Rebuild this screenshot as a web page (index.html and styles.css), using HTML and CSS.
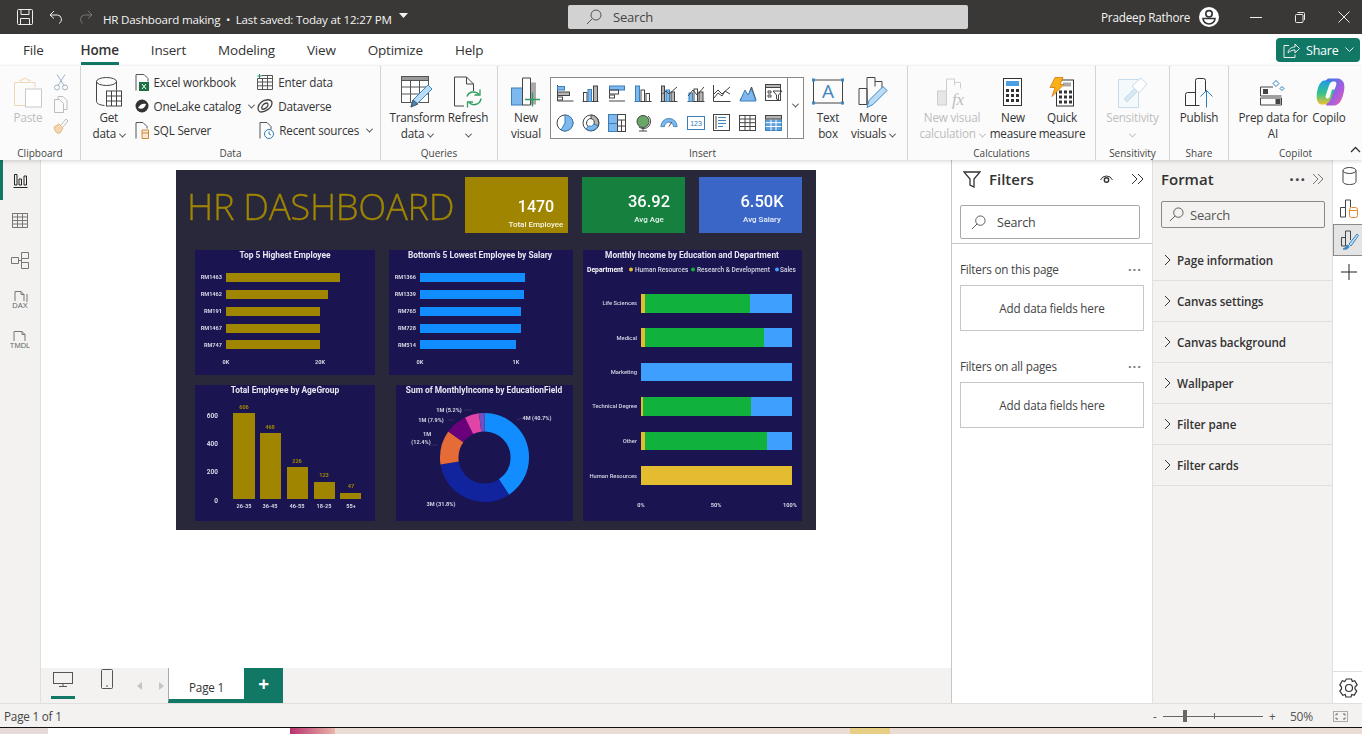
FILE: index.html
```html
<!DOCTYPE html>
<html lang="en">

<head>
    <meta charset="UTF-8">
    <meta name="viewport" content="width=device-width, initial-scale=1.0">
    <title>HR Dashboard making</title>
    <link rel="stylesheet" href="styles.css">
</head>

<body>
    <!-- title bar -->
    <header class="titlebar">
        <div class="title-left">
            <svg class="ic-light" width="16" height="16" viewBox="0 0 16 16"><rect x=".5" y=".5" width="15" height="15" rx="1"/><path d="M4 .5v5h8v-5M3.5 15.5v-6h9v6"/></svg>
            <svg class="ic-light" width="14" height="14" viewBox="0 0 14 14"><path d="M5 1 1 5l4 3.5M1 5h7.5a4.5 4.5 0 0 1 1.5 8.5"/></svg>
            <svg class="ic-dim" width="14" height="14" viewBox="0 0 14 14"><path d="M9 1l4 4-4 3.5M13 5H5.5A4.5 4.5 0 0 0 4 13.5"/></svg>
            <span class="doc-title">HR Dashboard making &nbsp;•&nbsp; Last saved: Today at 12:27 PM</span>
            <svg class="caret" width="9" height="5" viewBox="0 0 9 5"><path d="M0 0h9L4.5 5z"/></svg>
        </div>
        <div class="title-search">
            <svg class="ic" width="16" height="16" viewBox="0 0 16 16"><circle cx="10" cy="6" r="5"/><path d="M6.5 9.5 1 15"/></svg>
            <span>Search</span>
        </div>
        <div class="title-right">
            <span class="user-name">Pradeep Rathore</span>
            <svg class="avatar" width="20" height="20" viewBox="0 0 20 20"><circle cx="10" cy="10" r="10" fill="#fff"/><circle cx="10" cy="6.8" r="3.2" fill="none" stroke="#333" stroke-width="1.6"/><path d="M4 11.5h12a6 5.5 0 0 1-12 0z" fill="none" stroke="#333" stroke-width="1.6"/></svg>
            <svg class="ic-light win-min" width="12" height="12" viewBox="0 0 12 12"><path d="M0 6.5h12"/></svg>
            <svg class="ic-light win-btn" width="10" height="11" viewBox="0 0 10 11"><rect x=".5" y="2.5" width="7.5" height="8" rx="1"/><path d="M2.5.5h6a1 1 0 0 1 1 1V8"/></svg>
            <svg class="ic-light win-btn" width="12" height="12" viewBox="0 0 12 12"><path d="M.5.5l11 11M11.5.5l-11 11"/></svg>
        </div>
    </header>

    <!-- ribbon tabs -->
    <nav class="tabs">
        <span class="tab tab-file">File</span>
        <span class="tab tab-active">Home</span>
        <span class="tab">Insert</span>
        <span class="tab">Modeling</span>
        <span class="tab">View</span>
        <span class="tab">Optimize</span>
        <span class="tab">Help</span>
        <button class="share-btn">
            <svg class="ic-light" width="17" height="15" viewBox="0 0 17 15"><path d="M6 2.5H1v12h11v-3M5 10c.5-4 3-6 7-6V1l4.5 4.5L12 10V7c-3 0-5 1-7 3z"/></svg>
            <span>Share</span>
            <svg class="ic-light" width="9" height="6" viewBox="0 0 9 6"><path d="M.5.5l4 4 4-4"/></svg>
        </button>
    </nav>

    <!-- ribbon -->
    <section class="ribbon">
        <div class="group group-clipboard">
            <div class="group-body">
                <div class="big-btn paste-btn disabled">
                    <svg class="big-icon" width="30" height="32" viewBox="0 0 30 32" fill="none"><path d="M6 6H1.5v23H12M18 6h4v5M7 6V3.5h3a2 2 0 0 1 4 0h3V6z" stroke="#f2d6b3"/><rect x="12.5" y="12.5" width="16" height="18" stroke="#c9c9c9" fill="#fff"/></svg>
                    <span class="btn-label">Paste</span>
                </div>
                <div class="clip-col">
                    <svg width="14" height="17" viewBox="0 0 14 17" fill="none" stroke="#9fb2c4"><path d="M3 .5l7 11M11 .5l-7 11"/><circle cx="3" cy="13.5" r="2.5"/><circle cx="11" cy="13.5" r="2.5"/></svg>
                    <svg width="16" height="17" viewBox="0 0 16 17" fill="none" stroke="#bdbdbd"><path d="M5 3.5v-3h5l4 4v9h-4M1.5 3.5h5l4 4v9h-9z"/></svg>
                    <svg width="17" height="16" viewBox="0 0 17 16" fill="none"><path d="M9 7l5-6 2 2-5 6" stroke="#bdbdbd"/><path d="M2 9l5-3 4 4-3 5c-3 1-5-1-6-6z" fill="#f3d6ad" stroke="#e3b985"/></svg>
                </div>
            </div>
            <div class="group-label">Clipboard</div>
        </div>

        <div class="group group-data">
            <div class="group-body">
                <div class="big-btn get-data">
                    <svg class="big-icon" width="28" height="32" viewBox="0 0 28 32" fill="none" stroke="#444"><ellipse cx="11.5" cy="5" rx="10" ry="4"/><path d="M1.5 5v20c0 2 3 3.5 8 4M21.5 5v9"/><rect x="11.5" y="14.5" width="15" height="15" fill="#fff"/><path d="M11.5 19.5h15M11.5 24.5h15M16.5 14.5v15M21.5 14.5v15"/></svg>
                    <span class="btn-label">Get<br>data <i class="chev"></i></span>
                </div>
                <div class="src-col">
                    <div class="src-row">
                        <svg width="14" height="17" viewBox="0 0 14 17" fill="none" stroke="#555"><path d="M1 16.5V.5h8l4 4v3"/><rect x="4" y="8" width="10" height="9" fill="#1d7044" stroke="none"/><path d="M7 10l4 5M11 10l-4 5" stroke="#fff"/></svg>
                        <span>Excel workbook</span>
                    </div>
                    <div class="src-row">
                        <svg width="14" height="14" viewBox="0 0 14 14"><circle cx="7" cy="7" r="6.5" fill="#333"/><path d="M3 9c2-4 5-5 8-4-1 4-4 6-8 4z" fill="#fff"/></svg>
                        <span>OneLake catalog</span><i class="chev chev-gap"></i>
                    </div>
                    <div class="src-row">
                        <svg width="14" height="17" viewBox="0 0 14 17" fill="none" stroke="#555"><path d="M1 16.5V.5h7l4 4v2"/><path d="M7 8h6.5v8.5H7z" fill="#fde8cf" stroke="#c98a3c"/><path d="M7 11h6.5" stroke="#c98a3c"/></svg>
                        <span>SQL Server</span>
                    </div>
                </div>
                <div class="src-col src-col2">
                    <div class="src-row">
                        <svg width="16" height="16" viewBox="0 0 16 16" fill="none" stroke="#555"><path d="M4.5 1.5h11v14H.5v-11h15M.5 8h15M.5 11.8h15M5.5 4.5v11M10.5 1.5v14"/><path d="M2.5 0v4M.5 2h4" stroke="#1a8a6e"/></svg>
                        <span>Enter data</span>
                    </div>
                    <div class="src-row">
                        <svg width="16" height="14" viewBox="0 0 16 14" fill="none" stroke="#444" stroke-width="1.3"><path d="M9 1c4-1 6 1 6 3 0 5-7 9-11 9-2 0-3-2-3-4 0-4 5-8 8-8z"/><path d="M10 4C7 4 4 7 5 10c2 1 6-2 6-4 0-1-.5-2-1-2z"/></svg>
                        <span>Dataverse</span>
                    </div>
                    <div class="src-row src-recent">
                        <svg width="15" height="17" viewBox="0 0 15 17" fill="none" stroke="#555"><path d="M1 16.5V.5h7l4 4v3"/><circle cx="10" cy="12" r="4.5" fill="#fff" stroke="#2b7bb9"/><path d="M10 9.5V12l2 1" stroke="#2b7bb9"/></svg>
                        <span>Recent sources</span><i class="chev chev-gap"></i>
                    </div>
                </div>
            </div>
            <div class="group-label">Data</div>
        </div>

        <div class="group group-queries">
            <div class="group-body">
                <div class="big-btn transform-btn">
                    <svg class="big-icon" width="32" height="33" viewBox="0 0 32 33" fill="none" stroke="#555"><rect x=".5" y=".5" width="27" height="26" fill="#fff"/><rect x=".5" y=".5" width="27" height="4" fill="#999"/><path d="M.5 11h27M.5 18h27M9.5 4.5v22M18.5 4.5v22"/><path d="M10 31l2-7 15-15 4 4-15 15z" fill="#bcdcf5" stroke="#3c86c4"/><path d="M10 31l2-7 5 4z" fill="#3c86c4"/></svg>
                    <span class="btn-label">Transform<br>data <i class="chev"></i></span>
                </div>
                <div class="big-btn refresh-btn">
                    <svg class="big-icon" width="28" height="32" viewBox="0 0 28 32" fill="none"><path d="M10 29.5H.5V.5h12l7 7v7M12.5.5v7h7" stroke="#444"/><path d="M13 20a7 7 0 0 1 12-2M27 22a7 7 0 0 1-12 4" stroke="#2f9e5f" stroke-width="1.5"/><path d="M26 13v5.5h-5.5M13.5 31v-5.5H19" stroke="#2f9e5f" stroke-width="1.3"/></svg>
                    <span class="btn-label">Refresh<br><i class="chev"></i></span>
                </div>
            </div>
            <div class="group-label">Queries</div>
        </div>

        <div class="group group-insert">
            <div class="group-body">
                <div class="big-btn new-visual">
                    <svg class="big-icon" width="30" height="32" viewBox="0 0 30 32" fill="none" stroke="#444"><rect x=".5" y="11.5" width="11" height="17" fill="#7db8ee" stroke="#3c7fb8"/><path d="M11.5 28.5v-27h8v27h-8z"/><rect x="20" y="6" width="5" height="22" fill="#a9a9a9" stroke="none"/><path d="M21.5 16v14M14 23h15" stroke="#2f9e5f" stroke-width="1.4"/></svg>
                    <span class="btn-label">New<br>visual</span>
                </div>
                <div class="gallery">
                    <div class="gallery-grid">
                        <svg viewBox="0 0 18 18"><path d="M1.5 1v16h16"/><rect x="1.5" y="2.5" width="7" height="3.5" class="b"/><rect x="1.5" y="8" width="12" height="3.5" class="g"/><rect x="1.5" y="13" width="5" height="3"/></svg>
                        <svg viewBox="0 0 18 18"><path d="M.5 17.5h16"/><rect x="1.5" y="8.5" width="3.5" height="9"/><rect x="6" y="5.5" width="3.5" height="12" class="b"/><rect x="11.5" y="2" width="4" height="15.5" class="g"/></svg>
                        <svg viewBox="0 0 18 18"><path d="M1 17h16"/><rect x="1.5" y="2" width="15" height="4" class="b"/><rect x="1.5" y="6" width="9" height="4"/><rect x="1.5" y="11" width="5" height="3"/></svg>
                        <svg viewBox="0 0 18 18"><path d="M.5 17.5h17"/><rect x="1.5" y="2" width="4" height="15.5" class="b"/><rect x="7" y="6" width="3.5" height="11.5"/><rect x="12" y="9.5" width="3.5" height="8"/></svg>
                        <svg viewBox="0 0 18 18"><path d="M.5 17.5h17"/><rect x="1.5" y="2" width="3" height="15.5" class="g"/><rect x="6" y="6" width="3.5" height="11.5" class="b"/><rect x="11" y="8" width="3.5" height="9.5" class="g"/><path d="M1 11l5-4 3 3 8-7"/></svg>
                        <svg viewBox="0 0 18 18"><path d="M.5 17.5h17"/><rect x="2" y="9" width="3.5" height="8.5" class="b"/><rect x="7" y="5" width="3.5" height="12.5"/><rect x="12" y="8" width="4" height="9.5" class="g"/><path d="M1 12l5-6 4 5 7-8"/></svg>
                        <svg viewBox="0 0 18 18"><path d="M.5 1v16.5h17M1 10l4-4 4 4 8-7M1 14l4-5 4 3 3-5 5 3"/></svg>
                        <svg viewBox="0 0 18 18"><path d="M1 16l5-7 3 3 3.5-9 4.5 13z" class="g"/><path d="M1 17h16L12.5 5 9 11 6 6z" class="b"/></svg>
                        <svg viewBox="0 0 18 18"><rect x=".5" y=".5" width="15" height="16"/><rect x=".5" y=".5" width="15" height="3" class="g"/><path d="M3 7h3v2H3zM3 11h3v2H3z"/><path d="M8 7h9l-3.5 4v5l-2-1v-4z"/></svg>
                        <svg viewBox="0 0 18 18"><circle cx="9" cy="9" r="8"/><path d="M9 1a8 8 0 0 1 0 16 8 8 0 0 1-4-1l4-7z" class="b"/></svg>
                        <svg viewBox="0 0 18 18"><circle cx="9" cy="9" r="8"/><circle cx="9" cy="9" r="4.5"/><path d="M9 1a8 8 0 0 1 7 11l-4-2a4.5 4.5 0 0 0-3-5.5z" class="g"/><path d="M16 12a8 8 0 0 1-12 3l2.5-3a4.5 4.5 0 0 0 5.5-2z" class="b"/></svg>
                        <svg viewBox="0 0 18 18"><rect x=".5" y=".5" width="17" height="17"/><rect x=".5" y=".5" width="9" height="9" class="b"/><rect x=".5" y="9.5" width="9" height="8" class="b"/><path d="M9.5.5v17M9.5 6h8M13.5 6v11.5M9.5 12h8"/></svg>
                        <svg viewBox="0 0 18 18"><circle cx="9" cy="7.5" r="6" class="gl"/><path d="M14 2a7 7 0 0 1-9 11M9 14.5V17M5 17h8"/></svg>
                        <svg viewBox="0 0 20 18"><path d="M1 13a9 9 0 0 1 18 0h-4a5 5 0 0 0-10 0z" class="b"/><path d="M10 13l3-5"/></svg>
                        <svg viewBox="0 0 18 18"><rect x=".5" y="2.5" width="17" height="13" class="blo"/><text x="9" y="12" class="num">123</text></svg>
                        <svg viewBox="0 0 18 18"><rect x=".5" y=".5" width="16" height="16"/><path d="M3 2v13"/><path d="M5 3.5h8M5 6.5h8M5 9.5h8M5 12.5h5" stroke="#3c86c4"/></svg>
                        <svg viewBox="0 0 18 18"><rect x=".5" y="1.5" width="16" height="15"/><path d="M.5 5h16M.5 8.7h16M.5 12.5h16M6 1.5v15M11 1.5v15"/></svg>
                        <svg viewBox="0 0 18 18"><rect x=".5" y="1.5" width="16" height="15" class="bt"/><path d="M.5 5h16M.5 8.7h16M.5 12.5h16M6 1.5v15M11 1.5v15" stroke="#fff"/><rect x=".5" y="1.5" width="16" height="3.5" class="g"/></svg>
                    </div>
                    <div class="gallery-more"><i class="chev"></i></div>
                </div>
                <div class="big-btn text-box">
                    <svg class="big-icon" width="32" height="28" viewBox="0 0 32 28" fill="none" stroke="#444"><rect x="1.5" y="1.5" width="29" height="23"/><path d="M0 0h3v3H0zM29 0h3v3h-3zM0 23h3v3H0zM29 23h3v3h-3z" fill="#3c86c4" stroke="none"/><text x="16" y="19" class="icon-a">A</text></svg>
                    <span class="btn-label">Text<br>box</span>
                </div>
                <div class="big-btn more-visuals">
                    <svg class="big-icon" width="30" height="32" viewBox="0 0 30 32" fill="none" stroke="#444"><path d="M1 12h8v16H1zM9 28V1h8v9M17 5h7v8"/><path d="M9 31l2-7 14-14 4 4-14 14z" fill="#bcdcf5" stroke="#3c86c4"/></svg>
                    <span class="btn-label">More<br>visuals <i class="chev"></i></span>
                </div>
            </div>
            <div class="group-label">Insert</div>
        </div>

        <div class="group group-calc">
            <div class="group-body">
                <div class="big-btn calc-visual disabled">
                    <svg class="big-icon" width="30" height="30" viewBox="0 0 30 30" fill="none" stroke="#cfcfcf"><rect x=".5" y="13.5" width="9" height="14" fill="#e6e6e6"/><path d="M9.5 27V1.5h8V8M17.5 5h6v6"/><text x="15" y="27" class="icon-fx">fx</text></svg>
                    <span class="btn-label">New visual<br>calculation <i class="chev"></i></span>
                </div>
                <div class="big-btn new-measure">
                    <svg class="big-icon" width="20" height="29" viewBox="0 0 20 29"><rect x=".5" y=".5" width="18" height="27" fill="#fff" stroke="#333"/><rect x="3" y="3" width="13" height="5" fill="#4a9fe3"/><path d="M3 11h3v3H3zM8 11h3v3H8zM13 11h3v3h-3zM3 16h3v3H3zM8 16h3v3H8zM13 16h3v3h-3zM3 21h3v3H3zM8 21h3v3H8zM13 21h3v3h-3z" fill="#333"/></svg>
                    <span class="btn-label">New<br>measure</span>
                </div>
                <div class="big-btn quick-measure">
                    <svg class="big-icon" width="26" height="30" viewBox="0 0 26 30"><rect x="7.5" y="2.5" width="17" height="26" fill="#fff" stroke="#333"/><rect x="14" y="5" width="8" height="4" fill="#aaa"/><path d="M10 13h3v3h-3zM15 13h3v3h-3zM20 13h3v3h-3zM10 18h3v3h-3zM15 18h3v3h-3zM20 18h3v3h-3zM10 23h3v3h-3zM15 23h3v3h-3zM20 23h3v3h-3z" fill="#333"/><path d="M6 0h8l-3 7h4L3 19l3-9H1z" fill="#f7b21a" stroke="#d9720f" stroke-width=".8"/></svg>
                    <span class="btn-label">Quick<br>measure</span>
                </div>
            </div>
            <div class="group-label">Calculations</div>
        </div>

        <div class="group group-sens">
            <div class="group-body">
                <div class="big-btn sens-btn disabled">
                    <svg class="big-icon" width="30" height="31" viewBox="0 0 30 31" fill="none" stroke="#c4dcec"><path d="M.5 2.5h20v28H.5z" fill="#f4f9fc"/><path d="M6 22L17 11l3 3L9 25z" fill="#d7e8f3"/><path d="M14 9l9-8 6 6-8 9z" fill="#fff"/></svg>
                    <span class="btn-label">Sensitivity<br><i class="chev"></i></span>
                </div>
            </div>
            <div class="group-label">Sensitivity</div>
        </div>

        <div class="group group-share">
            <div class="group-body">
                <div class="big-btn">
                    <svg class="big-icon" width="28" height="30" viewBox="0 0 28 30" fill="none" stroke="#333"><path d="M.5 28V17a2 2 0 0 1 2-2h8v13zM10.5 28V3a2 2 0 0 1 2-2h6a2 2 0 0 1 2 2v11"/><path d="M.5 28h14"/><path d="M21.5 30V13M15.5 19l6-6 6 6" stroke="#2b7bb9"/></svg>
                    <span class="btn-label">Publish</span>
                </div>
            </div>
            <div class="group-label">Share</div>
        </div>

        <div class="group group-copilot">
            <div class="group-body">
                <div class="big-btn prep-btn">
                    <svg class="big-icon" width="26" height="28" viewBox="0 0 26 28" fill="none" stroke="#444"><path d="M.5 8.5H13M.5 8.5v9h21"/><path d="M.5 19.5h21v7H.5z"/><rect x="3.5" y="11" width="4" height="4" fill="#444"/><rect x="16" y="21" width="4" height="4" fill="#444"/><path d="M13 5l3-3 3 3-3 3zM20 10l2-2 2 2-2 2z" stroke="#2b7bb9"/></svg>
                    <span class="btn-label">Prep data for<br>AI</span>
                </div>
                <div class="big-btn copilot-btn">
                    <svg class="big-icon copilot-icon" width="30" height="28" viewBox="0 0 30 28"><defs><linearGradient id="cpa" x1="0" y1="0" x2="0" y2="1"><stop offset="0" stop-color="#1f9be8"/><stop offset=".55" stop-color="#38c48a"/><stop offset="1" stop-color="#f2c12e"/></linearGradient><linearGradient id="cpb" x1="0" y1="0" x2="1" y2="1"><stop offset="0" stop-color="#2e7fe8"/><stop offset=".6" stop-color="#a55ce0"/><stop offset="1" stop-color="#ef5fa7"/></linearGradient></defs><path d="M8 2c-4 1-6 6-7 12-1 5 0 11 4 12h9c3 0 4-2 5-5l3-10h-6l-2 7c-1 2-2 2-3 2s-2-1-1-4l3-9c1-3 3-4 5-5z" fill="url(#cpa)"/><path d="M13 0c-2 0-3 2-4 3h9c2 0 3 1 2 4l-4 11c-1 3-3 6-5 7l-1 2h9c4-1 6-4 8-10 2-7 2-13-1-15-1-1-2-2-4-2z" fill="url(#cpb)"/></svg>
                    <span class="btn-label">Copilo</span>
                </div>
            </div>
            <div class="group-label">Copilot</div>
        </div>
        <svg class="ribbon-collapse" width="11" height="7" viewBox="0 0 11 7" fill="none" stroke="#333" stroke-width="1.3"><path d="M1 6l4.5-4.5L10 6"/></svg>
    </section>

    <main class="main">
        <aside class="left-rail">
            <div class="rail-item rail-item-active">
                <svg width="15" height="15" viewBox="0 0 15 15" fill="none" stroke="#222"><path d="M.5 14.5h14M1.500 12V1.500H4V12zM6 12V6h2.500v6zM11 12V3h2.500v9z"/></svg>
            </div>
            <div class="rail-item">
                <svg width="16" height="15" viewBox="0 0 16 15" fill="none" stroke="#777"><rect x=".5" y=".5" width="15" height="14"/><path d="M.5 4h15M.5 7.5h15M.5 11h15M5.5.5v14M10.5.5v14"/></svg>
            </div>
            <div class="rail-item">
                <svg width="18" height="17" viewBox="0 0 18 17" fill="none" stroke="#777"><path d="M.5 5.5h7v6h-7zM10.5.5h7v6h-7zM10.5 10.5h7v6h-7zM7.5 8.5h3M10.5 3.500v10"/></svg>
            </div>
            <div class="rail-item">
                <svg width="18" height="18" viewBox="0 0 18 18" fill="none" stroke="#777"><path d="M4 10V.5h6l3 3V10M16 3v8M10 .5v3h3"/><text x="9" y="17" class="rail-txt">DAX</text></svg>
            </div>
            <div class="rail-item">
                <svg width="20" height="18" viewBox="0 0 20 18" fill="none" stroke="#777"><path d="M4 10V.5h8l3 3V10M12 .5v3h3"/><text x="10" y="17" class="rail-txt">TMDL</text></svg>
            </div>
        </aside>

        <div class="canvas-col">
            <div class="canvas">
                <!-- the report page -->
                <div class="dash">
                    <div class="dash-head">
                        <h1 class="dash-title">HR DASHBOARD</h1>
                        <div class="kpi kpi-gold kpi-low"><b>1470</b><span>Total Employee</span></div>
                        <div class="kpi kpi-green"><b>36.92</b><span>Avg Age</span></div>
                        <div class="kpi kpi-blue"><b>6.50K</b><span>Avg Salary</span></div>
                    </div>
                    <div class="dash-body">
                        <div class="dash-left">
                            <div class="dash-row dash-row-top">
                                <svg class="panel panel-a" viewBox="195 250 180 125">
                                    <text x="285" y="258" class="p-title">Top 5 Highest Employee</text>
                                    <g class="lab-r">
                                        <text x="222" y="279">RM1463</text>
                                        <text x="222" y="296">RM1462</text>
                                        <text x="222" y="313">RM191</text>
                                        <text x="222" y="330">RM1467</text>
                                        <text x="222" y="347">RM747</text>
                                    </g>
                                    <g fill="#a08600">
                                        <rect x="226" y="273" width="114" height="9"/>
                                        <rect x="226" y="290" width="102" height="9"/>
                                        <rect x="226" y="307" width="94" height="9"/>
                                        <rect x="226" y="324" width="94" height="9"/>
                                        <rect x="226" y="340" width="94" height="9"/>
                                    </g>
                                    <g class="lab-c">
                                        <text x="226" y="364">0K</text>
                                        <text x="320" y="364">20K</text>
                                    </g>
                                </svg>
                                <svg class="panel panel-b" viewBox="389 250 184 125">
                                    <text x="480" y="258" class="p-title">Bottom's 5 Lowest Employee by Salary</text>
                                    <g class="lab-r">
                                        <text x="416" y="279">RM1366</text>
                                        <text x="416" y="296">RM1339</text>
                                        <text x="416" y="313">RM765</text>
                                        <text x="416" y="330">RM728</text>
                                        <text x="416" y="347">RM514</text>
                                    </g>
                                    <g fill="#118dff">
                                        <rect x="420" y="273" width="105" height="9"/>
                                        <rect x="420" y="290" width="104" height="9"/>
                                        <rect x="420" y="307" width="101" height="9"/>
                                        <rect x="420" y="324" width="101" height="9"/>
                                        <rect x="420" y="340" width="96" height="9"/>
                                    </g>
                                    <g class="lab-c">
                                        <text x="420" y="364">0K</text>
                                        <text x="516" y="364">1K</text>
                                    </g>
                                </svg>
                            </div>
                            <div class="dash-row dash-row-bottom">
                                <svg class="panel panel-a" viewBox="195 385 180 136">
                                    <text x="285" y="393" class="p-title">Total Employee by AgeGroup</text>
                                    <g class="lab-r lab-big">
                                        <text x="218" y="418">600</text>
                                        <text x="218" y="446">400</text>
                                        <text x="218" y="474">200</text>
                                        <text x="218" y="503">0</text>
                                    </g>
                                    <g fill="#a08600">
                                        <rect x="233" y="413" width="22" height="86"/>
                                        <rect x="260" y="433" width="21" height="66"/>
                                        <rect x="287" y="467" width="21" height="32"/>
                                        <rect x="314" y="482" width="21" height="17"/>
                                        <rect x="340" y="493" width="21" height="6"/>
                                    </g>
                                    <g class="lab-c lab-gold">
                                        <text x="244" y="409">606</text>
                                        <text x="270" y="429">468</text>
                                        <text x="297" y="463">226</text>
                                        <text x="324" y="477">123</text>
                                        <text x="351" y="488">47</text>
                                    </g>
                                    <g class="lab-c">
                                        <text x="244" y="508">26-35</text>
                                        <text x="270" y="508">36-45</text>
                                        <text x="297" y="508">46-55</text>
                                        <text x="324" y="508">18-25</text>
                                        <text x="351" y="508">55+</text>
                                    </g>
                                </svg>
                                <svg class="panel panel-c" viewBox="396 385 177 136">
                                    <text x="484" y="393" class="p-title">Sum of MonthlyIncome by EducationField</text>
                                    <g class="donut" transform="rotate(-90 484.5 457.5)">
                                        <circle cx="484.5" cy="457.5" r="35.3" pathLength="100" stroke="#118dff" stroke-dasharray="40.7 100"/>
                                        <circle cx="484.5" cy="457.5" r="35.3" pathLength="100" stroke="#12239e" stroke-dasharray="31.8 100" stroke-dashoffset="-40.7"/>
                                        <circle cx="484.5" cy="457.5" r="35.3" pathLength="100" stroke="#e66c37" stroke-dasharray="12.4 100" stroke-dashoffset="-72.5"/>
                                        <circle cx="484.5" cy="457.5" r="35.3" pathLength="100" stroke="#6b007b" stroke-dasharray="7.9 100" stroke-dashoffset="-84.9"/>
                                        <circle cx="484.5" cy="457.5" r="35.3" pathLength="100" stroke="#e044a7" stroke-dasharray="5.2 100" stroke-dashoffset="-92.8"/>
                                        <circle cx="484.5" cy="457.5" r="35.3" pathLength="100" stroke="#744ec2" stroke-dasharray="2 100" stroke-dashoffset="-98"/>
                                    </g>
                                    <path class="leader" d="M517 420l5-2h3M464 410h8M448 420h6M428 445h10M455 503h-4"/>
                                    <g class="lab-c">
                                        <text x="537" y="420">4M (40.7%)</text>
                                        <text x="449" y="412">1M (5.2%)</text>
                                        <text x="431" y="422">1M (7.9%)</text>
                                        <text x="427" y="436">1M</text>
                                        <text x="421" y="444">(12.4%)</text>
                                        <text x="441" y="506">3M (31.8%)</text>
                                    </g>
                                </svg>
                            </div>
                        </div>
                        <svg class="panel panel-d" viewBox="583 250 219 271">
                            <text x="692" y="258" class="p-title">Monthly Income by Education and Department</text>
                            <g class="legend">
                                <text x="587" y="272" class="legend-head">Department</text>
                                <circle cx="631" cy="269.5" r="2" fill="#e3bc2f"/>
                                <text x="635" y="272">Human Resources</text>
                                <circle cx="693" cy="269.5" r="2" fill="#10b23c"/>
                                <text x="697" y="272">Research &amp; Development</text>
                                <circle cx="777" cy="269.5" r="2" fill="#3f9fff"/>
                                <text x="780" y="272">Sales</text>
                            </g>
                            <g class="lab-r lab-thin">
                                <text x="637" y="305">Life Sciences</text>
                                <text x="637" y="340">Medical</text>
                                <text x="637" y="374">Marketing</text>
                                <text x="637" y="408">Technical Degree</text>
                                <text x="637" y="443">Other</text>
                                <text x="637" y="478">Human Resources</text>
                            </g>
                            <g fill="#3f9fff">
                                <rect x="641" y="294" width="151" height="19"/>
                                <rect x="641" y="328" width="151" height="19"/>
                                <rect x="641" y="363" width="151" height="18"/>
                                <rect x="641" y="397" width="151" height="19"/>
                                <rect x="641" y="432" width="151" height="18"/>
                            </g>
                            <g fill="#10b23c">
                                <rect x="645" y="294" width="105" height="19"/>
                                <rect x="645" y="328" width="119" height="19"/>
                                <rect x="643" y="397" width="108" height="19"/>
                                <rect x="645" y="432" width="122" height="18"/>
                            </g>
                            <g fill="#e3bc2f">
                                <rect x="641" y="294" width="4" height="19"/>
                                <rect x="641" y="328" width="4" height="19"/>
                                <rect x="641" y="397" width="2" height="19"/>
                                <rect x="641" y="432" width="4" height="18"/>
                                <rect x="641" y="466" width="151" height="19"/>
                            </g>
                            <g class="lab-c">
                                <text x="641" y="507">0%</text>
                                <text x="716" y="507">50%</text>
                                <text x="790" y="507">100%</text>
                            </g>
                        </svg>
                    </div>
                </div>
            </div>
            <div class="pagebar">
                <div class="view-btn view-btn-active">
                    <svg width="20" height="15" viewBox="0 0 20 15" fill="none" stroke="#555"><rect x=".5" y=".5" width="19" height="11"/><path d="M10 11.5v3M6 14.5h8"/></svg>
                </div>
                <div class="view-btn">
                    <svg width="12" height="20" viewBox="0 0 12 20" fill="none" stroke="#555"><rect x=".5" y=".5" width="11" height="19" rx="1"/><path d="M5 17h2"/></svg>
                </div>
                <svg class="page-arrow" width="5" height="8" viewBox="0 0 5 8"><path d="M5 0v8L0 4z"/></svg>
                <svg class="page-arrow page-arrow-next" width="5" height="8" viewBox="0 0 5 8"><path d="M0 0v8l5-4z"/></svg>
                <div class="page-tab">Page 1</div>
                <div class="page-add">+</div>
            </div>
        </div>

        <aside class="filters">
            <div class="pane-head">
                <svg width="18" height="17" viewBox="0 0 18 17" fill="none" stroke="#333" stroke-width="1.3"><path d="M1 1h16l-6 7v8l-4-2V8z"/></svg>
                <span class="pane-title">Filters</span>
                <svg class="eye" width="13" height="9" viewBox="0 0 13 9" fill="none" stroke="#333"><path d="M.5 5a6.5 6.5 0 0 1 12 0"/><circle cx="6.5" cy="5" r="2.2" stroke-width="1.4"/></svg>
                <svg width="13" height="12" viewBox="0 0 13 12" fill="none" stroke="#333"><path d="M1 1l5 5-5 5M7 1l5 5-5 5"/></svg>
            </div>
            <div class="filter-search">
                <svg class="ic" width="15" height="15" viewBox="0 0 16 16"><circle cx="10" cy="6" r="5"/><path d="M6.5 9.5 1 15"/></svg>
                <span>Search</span>
            </div>
            <div class="filter-rule"></div>
            <div class="filter-sec"><span>Filters on this page</span><span class="dots">···</span></div>
            <div class="filter-drop">Add data fields here</div>
            <div class="filter-sec filter-sec-next"><span>Filters on all pages</span><span class="dots">···</span></div>
            <div class="filter-drop">Add data fields here</div>
        </aside>

        <aside class="format">
            <div class="pane-head format-head">
                <span class="pane-title">Format</span>
                <span class="dots dots-big">···</span>
                <svg width="12" height="12" viewBox="0 0 12 12" fill="none" stroke="#777"><path d="M1 1l5 5-5 5M6 1l5 5-5 5"/></svg>
            </div>
            <div class="format-search">
                <svg class="ic" width="15" height="15" viewBox="0 0 16 16"><circle cx="10" cy="6" r="5"/><path d="M6.5 9.5 1 15"/></svg>
                <span>Search</span>
            </div>
            <div class="format-list">
                <div class="format-item"><svg width="7" height="12" viewBox="0 0 7 12"><path d="M1 1l5 5-5 5"/></svg>Page information</div>
                <div class="format-item"><svg width="7" height="12" viewBox="0 0 7 12"><path d="M1 1l5 5-5 5"/></svg>Canvas settings</div>
                <div class="format-item"><svg width="7" height="12" viewBox="0 0 7 12"><path d="M1 1l5 5-5 5"/></svg>Canvas background</div>
                <div class="format-item"><svg width="7" height="12" viewBox="0 0 7 12"><path d="M1 1l5 5-5 5"/></svg>Wallpaper</div>
                <div class="format-item"><svg width="7" height="12" viewBox="0 0 7 12"><path d="M1 1l5 5-5 5"/></svg>Filter pane</div>
                <div class="format-item"><svg width="7" height="12" viewBox="0 0 7 12"><path d="M1 1l5 5-5 5"/></svg>Filter cards</div>
            </div>
        </aside>

        <aside class="right-rail">
            <div class="rr-item">
                <svg width="15" height="18" viewBox="0 0 15 18" fill="none" stroke="#444"><ellipse cx="7.5" cy="3.5" rx="6.5" ry="3"/><path d="M1 3.5v11c0 2 3 3 6.5 3s6.5-1 6.5-3v-11"/></svg>
            </div>
            <div class="rr-item">
                <svg width="18" height="19" viewBox="0 0 18 19" fill="none" stroke="#444"><path d="M.5 18V8.5h5V18zM5.5 18V1h5v7"/><rect x="9.5" y="8.5" width="8" height="10" rx="2" stroke="#e8862e"/><path d="M9.5 11.5h8" stroke="#e8862e"/></svg>
            </div>
            <div class="rr-item rr-item-active">
                <svg width="18" height="20" viewBox="0 0 18 20" fill="none" stroke="#444"><path d="M.5 16V7.5h4V16zM4.5 16V1h5v9"/><path d="M2 19c4 1 6-1 6-3l-2-1c-1 2-2 3-4 4z" fill="#3c86c4" stroke="#3c86c4"/><path d="M8 14l8-10 1.5 1.5L10 16z" fill="#bcdcf5" stroke="#3c86c4"/></svg>
            </div>
            <div class="rr-item">
                <svg width="16" height="16" viewBox="0 0 16 16" fill="none" stroke="#222"><path d="M8 0v16M0 8h16"/></svg>
            </div>
            <div class="rr-gear">
                <svg width="20" height="20" viewBox="0 0 20 20" fill="none" stroke="#333" stroke-width="1.2"><path d="M7.5 1h5l.8 2.5 2.4-.8 2.5 4.3L16 9v2l1.700 2-2.500 4.300-2.400-.8-.8 2.500h-5l-.8-2.500-2.400.8L.8 13 2.500 11V9L.8 7l2.500-4.300 2.400.8z"/><circle cx="10" cy="10" r="3.5"/></svg>
            </div>
        </aside>
    </main>

    <footer class="status">
        <span class="page-count">Page 1 of 1</span>
        <div class="zoom-bar">
            <span class="zoom-sign">-</span>
            <div class="zoom-track"><i class="zoom-thumb"></i><i class="zoom-tick"></i></div>
            <span class="zoom-sign">+</span>
            <span class="zoom-val">50%</span>
            <svg width="15" height="11" viewBox="0 0 15 11" fill="none" stroke="#666"><rect x=".5" y=".5" width="14" height="10" stroke="#aaa"/><path d="M3 4.5V3h2M10 3h2v1.5M3 6.5V8h2M10 8h2V6.5"/></svg>
        </div>
    </footer>
    <div class="desktop-strip">
        <i class="strip-a"></i><i class="strip-b"></i><i class="strip-c"></i><i class="strip-d"></i><i class="strip-e"></i><i class="strip-f"></i>
    </div>
</body>

</html>
```

FILE: styles.css
```css
* {
    box-sizing: border-box;
}

body {
    margin: 0;
    width: 1362px;
    height: 734px;
    overflow: hidden;
    display: flex;
    flex-direction: column;
    font-family: "Open Sans", "Noto Sans", sans-serif;
    font-size: 11.7px;
    letter-spacing: -0.2px;
    color: #333;
    background-color: #fff;
}

svg {
    display: block;
    flex: none;
}

.ic {
    fill: none;
    stroke: #555;
}

.ic-light {
    fill: none;
    stroke: #eee;
}

.ic-dim {
    fill: none;
    stroke: #777;
}

/* title bar */
.titlebar {
    height: 34px;
    flex: none;
    display: flex;
    align-items: center;
    background-color: #393836;
    color: #f4f4f4;
}

.title-left {
    width: 568px;
    padding-left: 17px;
    display: flex;
    align-items: center;
    gap: 16px;
}

.doc-title {
    margin-left: -6px;
    margin-top: 5px;
    font-size: 11.6px;
    white-space: nowrap;
}

.caret {
    margin-left: -9px;
    margin-top: -3px;
    fill: #f4f4f4;
}

.title-search {
    width: 400px;
    height: 24px;
    padding-left: 18px;
    display: flex;
    align-items: center;
    gap: 11px;
    background-color: #d2d2d2;
    border-radius: 2px;
    color: #444;
    font-size: 13px;
}

.title-right {
    margin-left: 133px;
    display: flex;
    align-items: center;
}

.user-name {
    font-size: 11.7px;
    white-space: nowrap;
}

.avatar {
    margin-left: 9px;
}

.win-min {
    margin-left: 31px;
}

.win-btn {
    margin-left: 33px;
}

/* tabs */
.tabs {
    height: 32px;
    flex: none;
    padding-left: 23px;
    display: flex;
    align-items: flex-start;
    gap: 32px;
    background-color: #fff;
    font-size: 13.5px;
}

.tab {
    height: 31px;
    line-height: 32px;
    color: #333;
}

.tab-file {
    margin-right: 5px;
}

.tab-active {
    font-weight: 600;
    border-bottom: 3px solid #117865;
}

.share-btn {
    margin-left: auto;
    margin-right: 2px;
    margin-top: 4px;
    width: 84px;
    height: 24px;
    padding: 0 0 0 7px;
    display: flex;
    align-items: center;
    gap: 6px;
    border: none;
    border-radius: 4px;
    background-color: #117865;
    color: #fff;
    font-family: inherit;
    font-size: 12.5px;
    letter-spacing: -0.2px;
}

/* ribbon */
.ribbon {
    height: 94px;
    flex: none;
    position: relative;
    z-index: 2;
    display: flex;
    background-color: #fbfbfb;
    box-shadow: 0 1px 4px rgba(0, 0, 0, 0.18);
}

.group {
    height: 100%;
    display: flex;
    flex-direction: column;
    border-right: 1px solid #d4d4d4;
}

.group-body {
    flex: 1;
    display: flex;
    padding-top: 8px;
}

.group-label {
    height: 13px;
    line-height: 13px;
    text-align: center;
    font-size: 10px;
    letter-spacing: 0;
    color: #444;
}

.group-clipboard { width: 81px; }
.group-data { width: 300px; }
.group-queries { width: 117px; }
.group-insert { width: 410px; }
.group-calc { width: 188px; }
.group-sens { width: 74px; }
.group-share { width: 59px; }
.group-copilot { width: 133px; border-right: none; }

.big-btn {
    width: 44px;
    display: flex;
    flex-direction: column;
    align-items: center;
}

.big-icon {
    height: 35px;
    padding-top: 2px;
}

.btn-label {
    display: block;
    line-height: 16px;
    text-align: center;
    white-space: nowrap;
    color: #333;
}

.disabled .btn-label {
    color: #bdbdbd;
}

.chev {
    display: inline-block;
    width: 5px;
    height: 5px;
    margin-left: 1px;
    border-right: 1px solid #444;
    border-bottom: 1px solid #444;
    transform: rotate(45deg) translate(-1px, -1px);
}

.disabled .chev {
    border-color: #bdbdbd;
}

.paste-btn {
    margin-left: 6px;
}

.clip-col {
    margin-left: 2px;
    height: 60px;
    display: flex;
    flex-direction: column;
    align-items: center;
    justify-content: space-between;
}

.get-data {
    margin-left: 6px;
}

.src-col {
    width: 124px;
    margin-left: 4px;
    margin-top: -4px;
}

.src-col2 {
    margin-left: 0;
}

.src-row {
    height: 24px;
    display: flex;
    align-items: center;
    gap: 5px;
    white-space: nowrap;
    color: #333;
}

.chev-gap {
    margin-left: 3px;
}

.src-recent {
    padding-left: 2px;
}

.transform-btn {
    width: 60px;
    margin-left: 6px;
}

.refresh-btn {
    width: 42px;
}

.new-visual {
    margin-left: 6px;
}

.gallery {
    width: 254px;
    height: 62px;
    margin-left: 2px;
    margin-top: 3px;
    display: flex;
    background-color: #fff;
    border: 1px solid #8a8a8a;
}

.gallery-grid {
    flex: 1;
    display: grid;
    grid-template-columns: repeat(9, 26.1px);
    grid-template-rows: 30px 30px;
    padding-left: 1px;
    place-items: center;
    border-right: 1px solid #8a8a8a;
}

.gallery-grid svg {
    width: 18px;
    height: 18px;
    fill: none;
    stroke: #444;
}

.gallery-grid .b { fill: #7db8ee; stroke: #3c7fb8; }
.gallery-grid .g { fill: #b5b5b5; }
.gallery-grid .gl { fill: #6aa86a; stroke: #444; }
.gallery-grid .blo { stroke: #3c7fb8; }
.gallery-grid .bt { fill: #5aa0dc; stroke: #3c7fb8; }

.num {
    font-family: "Liberation Sans", sans-serif;
    font-size: 7px;
    letter-spacing: 0;
    text-anchor: middle;
    fill: #2b7bb9;
    stroke: none;
}

.gallery-more {
    width: 16px;
    display: flex;
    align-items: center;
    justify-content: center;
    padding-bottom: 6px;
}

.text-box {
    width: 40px;
    margin-left: 4px;
}

.icon-a {
    font-family: "Open Sans", sans-serif;
    font-size: 19px;
    text-anchor: middle;
    fill: #3c86c4;
    stroke: none;
}

.more-visuals {
    width: 50px;
}

.calc-visual {
    width: 76px;
    margin-left: 6px;
}

.icon-fx {
    font-family: "Liberation Serif", serif;
    font-style: italic;
    font-size: 17px;
    fill: #bdbdbd;
    stroke: none;
}

.new-measure {
    width: 46px;
}

.quick-measure {
    width: 50px;
    margin-left: 1px;
}

.sens-btn {
    width: 73px;
}

.group-share .big-btn {
    width: 58px;
}

.prep-btn {
    width: 76px;
    margin-left: 6px;
}

.copilot-btn {
    width: 36px;
}

.copilot-icon {
    margin-left: 4px;
}

.ribbon-collapse {
    position: absolute;
    right: 1px;
    bottom: 7px;
}

/* main area */
.main {
    flex: 1;
    min-height: 0;
    display: flex;
}

.left-rail {
    width: 41px;
    flex: none;
    background-color: #f3f2f1;
    border-right: 1px solid #e1dfdd;
}

.rail-item {
    height: 40px;
    display: flex;
    align-items: center;
    justify-content: center;
}

.rail-item-active {
    border-left: 3px solid #117865;
    padding-right: 3px;
}

.rail-txt {
    font-family: "Liberation Sans", sans-serif;
    font-size: 7.5px;
    letter-spacing: 0;
    text-anchor: middle;
    fill: #666;
    stroke: none;
}

.canvas-col {
    flex: 1;
    min-width: 0;
    display: flex;
    flex-direction: column;
}

.canvas {
    flex: 1;
    padding-top: 10px;
    background-color: #fff;
}

.pagebar {
    height: 35px;
    flex: none;
    padding-left: 10px;
    display: flex;
    align-items: stretch;
    background-color: #f3f2f1;
}

.view-btn {
    width: 24px;
    height: 31px;
    margin-bottom: 4px;
    padding-bottom: 6px;
    display: flex;
    align-items: center;
    justify-content: center;
    border-bottom: 3px solid transparent;
}

.view-btn + .view-btn {
    margin-left: 20px;
}

.view-btn-active {
    border-bottom-color: #117865;
}

.page-arrow {
    margin: 14px 0 0 18px;
    fill: #c4c4c4;
}

.page-arrow-next {
    margin-left: 17px;
    margin-right: 4px;
}

.page-tab {
    width: 76px;
    line-height: 38px;
    text-align: center;
    background-color: #fff;
    border-left: 1px solid #aaa;
    border-bottom: 4px solid #117865;
    color: #333;
}

.page-add {
    width: 39px;
    line-height: 32px;
    text-align: center;
    background-color: #117865;
    color: #fff;
    font-size: 19px;
    font-weight: 700;
}

/* dashboard page */
.dash {
    width: 640px;
    height: 360px;
    margin: 0 auto;
    padding: 7px 14px 0 12px;
    background-color: #29273a;
    font-family: Roboto, "Liberation Sans", sans-serif;
    letter-spacing: 0;
    filter: blur(0.3px);
}

.dash-head {
    height: 56px;
    display: flex;
    gap: 14px;
}

.dash-title {
    width: 265px;
    margin: 0 -2px 0 0;
    text-indent: -1px;
    font-family: "Open Sans", sans-serif;
    font-size: 36.5px;
    font-weight: 300;
    line-height: 58px;
    letter-spacing: -0.35px;
    white-space: nowrap;
    color: #a08600;
    -webkit-text-stroke: 0.3px #a08600;
}

.kpi {
    width: 103px;
    padding: 15px 0 0 31px;
    display: flex;
    flex-direction: column;
    align-items: center;
    color: #fff;
}

.kpi b {
    font-size: 16.5px;
    font-weight: 500;
    line-height: 20px;
}

.kpi span {
    margin-top: 2px;
    font-size: 8px;
    font-weight: 500;
    line-height: 11px;
    white-space: nowrap;
    opacity: 0.9;
}

.kpi-low {
    padding-top: 20px;
    padding-left: 39px;
}

.kpi-low b {
    font-size: 16px;
}

.kpi-gold { background-color: #a08600; }
.kpi-green { background-color: #16803f; }
.kpi-blue { background-color: #3a66c8; padding-left: 23px; }

.dash-body {
    margin-top: 17px;
    margin-left: 7px;
    display: flex;
    gap: 10px;
}

.dash-left {
    display: flex;
    flex-direction: column;
    gap: 10px;
}

.dash-row {
    display: flex;
}

.dash-row-top {
    height: 125px;
    gap: 14px;
}

.dash-row-bottom {
    height: 136px;
    gap: 21px;
}

.panel {
    background-color: #1a1550;
    font-family: Roboto, "Liberation Sans", sans-serif;
}

.panel-a { width: 180px; }
.panel-b { width: 184px; }
.panel-c { width: 177px; }
.panel-d { width: 219px; height: 271px; }

.p-title {
    font-size: 8.4px;
    font-weight: 700;
    text-anchor: middle;
    fill: #e6e6f0;
}

.lab-r text,
.lab-c text,
.legend text {
    font-size: 5.6px;
    font-weight: 700;
    fill: #d6d6e4;
}

.lab-r text { text-anchor: end; }
.lab-c text { text-anchor: middle; }
.lab-big text { font-size: 6.5px; }
.lab-gold text { fill: #a08600; }
.lab-thin text { font-size: 5.8px; font-weight: 500; }

.legend text {
    font-size: 6.5px;
    font-weight: 500;
}

.legend .legend-head {
    font-size: 6.8px;
    font-weight: 700;
    fill: #fff;
}

.donut circle {
    fill: none;
    stroke-width: 18.5;
}

.leader {
    fill: none;
    stroke: #4a4680;
    stroke-width: 0.5;
}

/* filters pane */
.filters {
    width: 201px;
    flex: none;
    padding: 0 8px;
    background-color: #fff;
    border-left: 1px solid #c8c6c4;
}

.pane-head {
    height: 38px;
    padding-left: 3px;
    display: flex;
    align-items: center;
}

.pane-title {
    margin-left: 8px;
    flex: 1;
    font-size: 15px;
    font-weight: 600;
    letter-spacing: 0;
    color: #333;
}

.eye {
    margin-right: 18px;
}

.filter-search {
    width: 180px;
    height: 34px;
    margin-top: 7px;
    padding-left: 10px;
    display: flex;
    align-items: center;
    gap: 11px;
    border: 1px solid #a8a8a8;
    border-radius: 2px;
    font-size: 12.5px;
    color: #444;
}

.filter-rule {
    height: 1px;
    margin: 4px -8px 0;
    background-color: #c8c6c4;
}

.filter-sec {
    height: 17px;
    margin-top: 16px;
    padding-right: 2px;
    display: flex;
    justify-content: space-between;
    align-items: center;
    color: #444;
}

.filter-sec-next {
    margin-top: 26px;
}

.dots {
    font-size: 13px;
    font-weight: 700;
    letter-spacing: 1px;
    color: #777;
}

.dots-big {
    margin-right: 6px;
    font-size: 16px;
    letter-spacing: 1px;
    color: #444;
}

.filter-drop {
    width: 184px;
    height: 46px;
    margin-top: 8px;
    line-height: 44px;
    text-align: center;
    border: 1px solid #c8c6c4;
    color: #444;
}

/* format pane */
.format {
    width: 181px;
    flex: none;
    background-color: #f3f2f1;
    border-left: 1px solid #e1dfdd;
    border-right: 1px solid #e1dfdd;
}

.format-head {
    padding-left: 0;
    padding-right: 8px;
}

.format-search {
    width: 164px;
    height: 27px;
    margin: 3px 0 0 8px;
    padding-left: 7px;
    display: flex;
    align-items: center;
    gap: 6px;
    border: 1px solid #8a8886;
    border-radius: 2px;
    font-size: 13px;
    color: #555;
}

.format-list {
    margin-top: 12px;
}

.format-item {
    height: 41px;
    padding-left: 11px;
    display: flex;
    align-items: center;
    gap: 6px;
    border-bottom: 1px solid #e1dfdd;
    font-weight: 600;
    letter-spacing: -0.1px;
    color: #333;
}

.format-item svg {
    fill: none;
    stroke: #333;
}

/* right rail */
.right-rail {
    width: 29px;
    flex: none;
    display: flex;
    flex-direction: column;
    background-color: #fff;
}

.rr-item {
    height: 32px;
    padding-left: 3px;
    display: flex;
    align-items: center;
    justify-content: center;
}

.rr-item-active {
    background-color: #e4e4e4;
    border: 1px solid #8a8a8a;
    border-right: none;
}

.rr-gear {
    margin-top: auto;
    height: 32px;
    padding-left: 3px;
    display: flex;
    align-items: center;
    justify-content: center;
    border-top: 1px solid #e1dfdd;
}

/* status bar */
.status {
    height: 24px;
    flex: none;
    padding: 1px 0 0 4px;
    display: flex;
    align-items: center;
    justify-content: space-between;
    background-color: #f3f2f1;
    border-top: 1px solid #e1dfdd;
}

.page-count {
    color: #444;
}

.zoom-bar {
    display: flex;
    align-items: center;
    margin-right: 14px;
}

.zoom-sign {
    width: 7px;
    color: #555;
}

.zoom-track {
    width: 100px;
    height: 1px;
    margin: 0 6px 0 3px;
    display: flex;
    align-items: center;
    background-color: #666;
}

.zoom-thumb {
    width: 4px;
    height: 12px;
    margin-left: 20px;
    background-color: #666;
}

.zoom-tick {
    width: 1px;
    height: 6px;
    margin-left: 27px;
    background-color: #666;
}

.zoom-val {
    margin: 0 20px 0 14px;
    font-size: 12px;
    color: #555;
}

/* bit of the desktop showing under the window */
.desktop-strip {
    height: 7px;
    flex: none;
    display: flex;
    border-top: 1px solid #111;
}

.strip-a { width: 48px; background-color: #e6dad8; }
.strip-b { width: 242px; background-color: #fff; }
.strip-c { width: 45px; background: linear-gradient(90deg, #b8336f, #eab4a8); }
.strip-d { width: 515px; background-color: #eadcd4; }
.strip-e { width: 40px; background-color: #e6cf85; }
.strip-f { flex: 1; background-color: #eadcd4; }
```
